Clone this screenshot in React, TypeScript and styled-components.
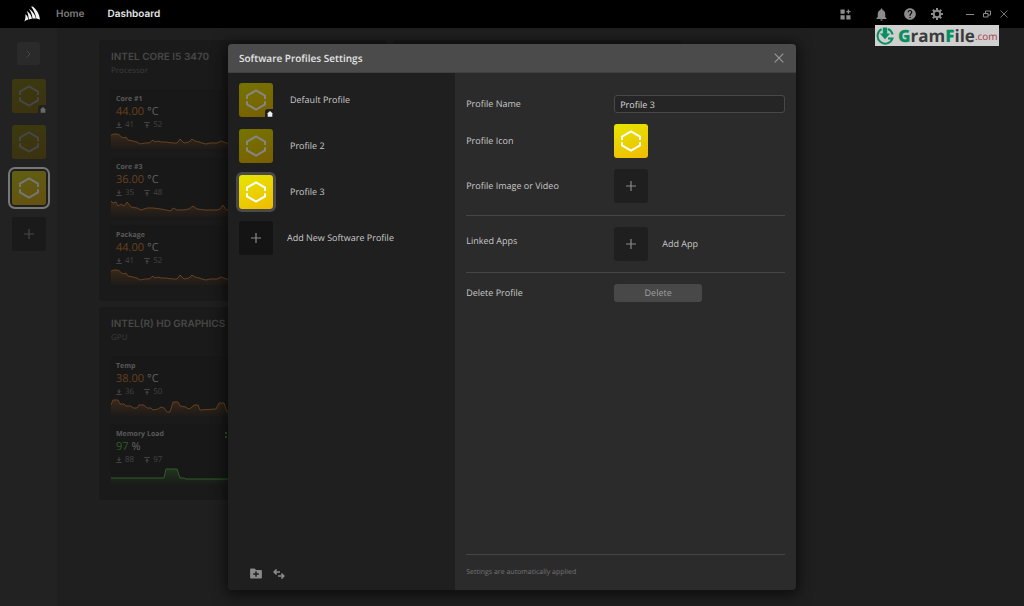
import React from "react";
import styled, { createGlobalStyle, css } from "styled-components";
import { MdHelp, MdNotifications } from "react-icons/md";

const Global = createGlobalStyle`
  *, *::before, *::after { box-sizing: border-box; }
  html, body, #root { height: 100%; }
  body {
    margin: 0;
    background: #1f1f1f;
    color: #c8c8c8;
    font: 9px/12px "Open Sans", "Noto Sans", sans-serif;
    text-rendering: geometricPrecision;
    overflow: hidden;
  }
  button, input { font: inherit; color: inherit; text-rendering: inherit; }
  button { border: 0; padding: 0; background: none; cursor: pointer; }
  h1, h2, h3, p, ul { margin: 0; padding: 0; }
  ul { list-style: none; }
  svg { display: block; flex: none; }
`;

const Page = styled.div`
  min-height: 100%;
  display: flex;
  flex-direction: column;
  position: relative;
`;

const TopBar = styled.header`
  height: 28px;
  flex: none;
  display: flex;
  align-items: center;
  padding: 0 16px 0 24px;
  background: #000;
`;

const Nav = styled.nav`
  display: flex;
  gap: 23px;
  margin-left: 16px;
  flex: 1;
`;

const NavLink = styled.a<{ $active?: boolean }>`
  font: 600 10px/14px Inter, "Open Sans", sans-serif;
  color: ${(p) => (p.$active ? "#e6e6e6" : "#7c7c7c")};
  text-decoration: none;
`;

const BarTools = styled.div<{ $gap: number; $before?: number }>`
  display: flex;
  align-items: center;
  gap: ${(p) => p.$gap}px;
  margin-left: ${(p) => p.$before ?? 0}px;
  color: #8c8c8c;
`;

const IconButton = styled.button`
  display: grid;
  place-items: center;
`;

const Body = styled.div`
  flex: 1;
  display: flex;
`;

const Side = styled.aside`
  width: 57px;
  flex: none;
  display: flex;
  flex-direction: column;
  align-items: center;
  gap: 12px;
  padding-top: 14px;
  background: #222;
`;

const Expand = styled.button`
  width: 23px;
  height: 23px;
  display: grid;
  place-items: center;
  border-radius: 3px;
  background: #2a2a2a;
  color: #484848;
  margin-bottom: 2px;
`;

const tileColors = {
  bright: css`background: linear-gradient(160deg, #e6e600, #efbc00); color: #fff;`,
  muted: css`background: linear-gradient(160deg, #757400, #785f00); color: #858585;`,
  dim: css`background: linear-gradient(160deg, #3b3a10, #3c3110); color: #464646;`,
  dimActive: css`background: linear-gradient(160deg, #605f12, #645010); color: #767676;`,
  plain: css`background: #141414; color: #8a8a8a;`,
  plainSoft: css`background: #1f1f1f; color: #8a8a8a;`,
  plainDim: css`background: #1a1a1a; color: #484848;`,
};

const Tile = styled.button<{ $kind: keyof typeof tileColors; $ring?: "line" | "solid" }>`
  position: relative;
  width: 34px;
  height: 34px;
  flex: none;
  display: grid;
  place-items: center;
  border-radius: 3px;
  ${(p) => tileColors[p.$kind]}
  ${(p) => p.$ring === "line" && css`box-shadow: 0 0 0 2px #1f1f1f, 0 0 0 4px #777;`}
  ${(p) => p.$ring === "solid" && css`box-shadow: 0 0 0 3px #4a4a4a;`}
`;

const HomeBadge = styled.span<{ $dim?: boolean }>`
  position: absolute;
  right: -1px;
  bottom: -1px;
  padding: 2px 1px 1px 2px;
  border-radius: 3px 0 0 0;
  background: ${(p) => (p.$dim ? "#222" : "#1f1f1f")};
  color: ${(p) => (p.$dim ? "#6a6a6a" : "#f0f0f0")};
`;

const Board = styled.main`
  flex: 1;
  display: grid;
  grid-template-columns: repeat(2, 288px);
  gap: 6px;
  align-content: start;
  padding: 12px 0 0 42px;
  overflow: hidden;
`;

const Card = styled.section`
  padding: 10px 12px 14px;
  border-radius: 4px;
  background: #1a1a1a;
`;

const CardTitle = styled.h2`
  font: 600 10px/14px Inter, "Open Sans", sans-serif;
  color: #484848;
`;

const CardSub = styled.p`
  font-size: 8px;
  line-height: 14px;
  margin-bottom: 11px;
  color: #3c3c3c;
`;

const Sensors = styled.div`
  display: grid;
  gap: 6px;
`;

const Sensor = styled.article`
  width: 130px;
  padding-top: 5px;
  border-radius: 3px;
  background: #181818;
  overflow: hidden;
`;

const SensorHead = styled.div`
  display: flex;
  justify-content: space-between;
  align-items: center;
  padding: 0 11px 0 5px;
`;

const SensorName = styled.h3`
  font-size: 7px;
  line-height: 12px;
  font-weight: 700;
  color: #5a5a5a;
`;

const Reading = styled.p<{ $color: string }>`
  padding-left: 5px;
  font-size: 11px;
  line-height: 12px;
  color: #636363;
  b { font-weight: 400; color: ${(p) => p.$color}; }
`;

const Range = styled.p`
  display: flex;
  align-items: center;
  gap: 3px;
  padding-left: 5px;
  font-size: 8px;
  line-height: 13px;
  color: #444;
  span { margin-right: 7px; }
`;

const Watermark = styled.div`
  position: absolute;
  top: 25px;
  right: 25px;
  width: 124px;
  height: 21px;
  display: flex;
  align-items: center;
  padding: 0 1px;
  background: #d0d0d0;
  z-index: 3;
  white-space: nowrap;
  font: 700 17px/20px "Open Sans", sans-serif;
  color: #3c3c3c;
  svg { margin-right: 4px; }
  b { color: #0a8f62; }
  small { font: 400 10px/20px "Open Sans", sans-serif; color: #a83a48; }
`;

const Overlay = styled.div`
  position: absolute;
  inset: 28px 0 0;
  display: flex;
  justify-content: center;
  padding: 16px;
`;

const Dialog = styled.div`
  width: 100%;
  max-width: 568px;
  display: flex;
  flex-direction: column;
  border-radius: 4px;
  overflow: hidden;
  box-shadow: 0 2px 14px 3px rgba(0, 0, 0, 0.6);
  background: #2b2b2b;
`;

const DialogHead = styled.div`
  height: 29px;
  flex: none;
  display: flex;
  align-items: center;
  justify-content: space-between;
  padding: 0 12px 0 11px;
  background: #4b4b4b;
  border-bottom: 1px solid #404040;
  color: #989898;
`;

const DialogTitle = styled.h1`
  font-size: 10px;
  line-height: 14px;
  font-weight: 600;
  color: #e4e4e4;
`;

const DialogBody = styled.div`
  flex: 1;
  display: flex;
`;

const ProfilePane = styled.div`
  width: 40%;
  display: flex;
  flex-direction: column;
  justify-content: space-between;
  padding: 10px 11px 11px;
  background: #1f1f1f;
`;

const ProfileList = styled.ul`
  display: grid;
  gap: 12px;
`;

const ProfileRow = styled.li<{ $gap?: number }>`
  display: flex;
  align-items: center;
  gap: ${(p) => p.$gap ?? 17}px;
`;

const PaneTools = styled.div`
  display: flex;
  align-items: center;
  gap: 11px;
  padding-left: 11px;
  color: #8a8a8a;
`;

const SettingsPane = styled.form`
  flex: 1;
  display: flex;
  flex-direction: column;
  padding: 22px 11px 11px;
`;

const Fields = styled.div`
  display: grid;
  gap: 11px;
  padding-bottom: 12px;
`;

const Field = styled.div`
  display: flex;
  align-items: center;
`;

const FieldName = styled.label<{ $top?: boolean }>`
  width: 148px;
  flex: none;
  ${(p) => p.$top && css`align-self: flex-start; padding-top: 8px;`}
`;

const TextBox = styled.input`
  flex: 1;
  min-width: 0;
  height: 18px;
  padding: 0 5px;
  border: 1px solid #484848;
  border-radius: 3px;
  background: #252525;
  color: #d8d8d8;
`;

const Group = styled.div`
  border-top: 1px solid #454545;
  padding: 11px 0;
`;

const DeleteButton = styled.button`
  width: 88px;
  height: 18px;
  border-radius: 3px;
  background: #484848;
  color: #a0a0a0;
`;

const AppHint = styled.span`
  margin-left: 14px;
`;

const Note = styled.p`
  margin-top: auto;
  padding-top: 12px;
  border-top: 1px solid #454545;
  font-size: 7px;
  color: #747474;
`;

const Hex = () => (
  <svg width="22" height="24" viewBox="0 0 22 24" fill="none" stroke="currentColor" strokeWidth="2">
    <path d="M2 11V7.600L11 2.500l9 5.100V11M2 13.300v3.100l9 5.100 9-5.100v-3.100" />
  </svg>
);

const Plus = () => (
  <svg width="10" height="10" viewBox="0 0 10 10" stroke="currentColor" strokeWidth="1.2">
    <path d="M5 0v10M0 5h10" />
  </svg>
);

const House = () => (
  <svg width="6" height="6" viewBox="0 0 7 7" fill="currentColor">
    <path d="M3.500 0L7 3.300H6.200V6.800H.8V3.300H0z" />
  </svg>
);

const Down = () => (
  <svg width="6" height="6" viewBox="0 0 6 6" stroke="currentColor" fill="currentColor" strokeWidth="1">
    <path d="M3 0v3M.2 5.500h5.600" /><path d="M1 2.200h4L3 4.400z" strokeWidth="0" />
  </svg>
);

const Up = () => (
  <svg width="6" height="6" viewBox="0 0 6 6" stroke="currentColor" fill="currentColor" strokeWidth="1">
    <path d="M3 6V3M.2.5h5.600" /><path d="M1 3.800h4L3 1.600z" strokeWidth="0" />
  </svg>
);

const Sails = () => (
  <svg width="16" height="16" viewBox="0 0 16 16" fill="#f2f2f2">
    <path d="M.3 15.600C1.500 13 1.700 10.600 1.300 8.200c1.900 1.300 2.800 3.100 2.900 5.400-1.400.5-2.700 1.100-3.900 2z" />
    <path d="M4.700 13.400C4.600 10.300 4 7.400 2.600 4.800c3 2 4.900 4.800 5.400 7.900-1.200.1-2.200.3-3.300.7z" />
    <path d="M8.500 12.600C8.200 8.700 6.900 5.500 4.900 2.700c3.900 2.500 6.300 6 7 9.800-1.200-.1-2.200-.1-3.400.1z" />
    <path d="M12.300 12.500C11.500 8.100 9.800 4 7 .5l1.400.3.200-.6C12.700 3.600 15.400 7.900 16 13.500c-1.200-.5-2.400-.8-3.700-1z" />
  </svg>
);

const Gear = () => (
  <svg width="12" height="12" viewBox="0 0 12 12" fill="none" stroke="currentColor">
    <circle cx="6" cy="6" r="3.300" strokeWidth="2" />
    <path d="M6 0v2.500M6 9.500V12M0 6h2.500M9.500 6H12M1.800 1.800l1.700 1.700M8.500 8.500l1.700 1.700M10.200 1.800L8.500 3.500M3.500 8.500l-1.700 1.700" strokeWidth="2" />
  </svg>
);

const ORANGE = "#67401f";
const GREEN = "#2d5f27";

const heat = "0,4 3,3 7,3 12,7 15,6 17,9 22,10 26,11 29,13 34,12 38,12 42,9 44,11 47,10 50,11 54,11 62,12 66,12 69,8 73,12 78,11 81,8 84,10 88,11 91,12 95,13 99,12 106,12 110,10 115,12 130,12";
const series: Record<string, string> = {
  heat,
  core3: "0,2 2,4 5,3 7,7 10,5 13,7 16,3 20,8 26,9 30,11 36,9 42,9 50,10 60,12 62,9 66,11 72,11 78,10 82,7 86,10 94,11 100,11 106,11 109,10 112,6 115,11 120,10 130,11",
  temp: "0,7 2,2 7,2 9,6 13,6 15,8 20,8 22,10 26,10 28,7 33,7 36,10 40,10 42,12 47,11 50,9 53,10 56,14 59,14 62,4 67,4 69,8 75,9 77,11 80,10 83,7 87,7 89,12 105,11 108,5 113,5 116,14 121,14 130,14",
  load: "0,12 53,12 55,3 66,3 69,12 73,12 75,13 130,13",
};

const Chart = ({ kind, color }: { kind: string; color: string }) => (
  <svg width="130" height="20" viewBox="0 0 130 20" fill="none">
    <defs>
      <linearGradient id={"fade-" + kind} x1="0" y1="0" x2="0" y2="1">
        <stop offset="0" stopColor={color} stopOpacity=".4" />
        <stop offset="1" stopColor={color} stopOpacity="0.02" />
      </linearGradient>
    </defs>
    <polygon points={`${series[kind]} 130,20 0,20`} fill={`url(#fade-${kind})`} />
    <polyline points={series[kind]} stroke={color} strokeWidth="1" />
  </svg>
);

type SensorData = { name: string; value: string; unit: string; lo: number; hi: number; chart: string; green?: boolean };

const SensorTile = ({ s }: { s: SensorData }) => {
  const color = s.green ? GREEN : ORANGE;
  return (
    <Sensor>
      <SensorHead>
        <SensorName>{s.name}</SensorName>
        {s.green && (
          <svg width="5" height="6" viewBox="0 0 5 6" fill={GREEN}><path d="M0 0h2v2H0zM0 4h2v2H0zM3 0h2v6H3z" /></svg>
        )}
      </SensorHead>
      <Reading $color={color}><b>{s.value}</b> {s.unit}</Reading>
      <Range><Down /><span>{s.lo}</span><Up /><span>{s.hi}</span></Range>
      <Chart kind={s.chart} color={color} />
    </Sensor>
  );
};

const cpu: SensorData[] = [
  { name: "Core #1", value: "44.00", unit: "°C", lo: 41, hi: 52, chart: "heat" },
  { name: "Core #3", value: "36.00", unit: "°C", lo: 35, hi: 48, chart: "core3" },
  { name: "Package", value: "44.00", unit: "°C", lo: 41, hi: 52, chart: "heat" },
];
const gpu: SensorData[] = [
  { name: "Temp", value: "38.00", unit: "°C", lo: 36, hi: 50, chart: "temp" },
  { name: "Memory Load", value: "97", unit: "%", lo: 88, hi: 97, chart: "load", green: true },
];

const SensorCard = ({ title, sub, items }: { title: string; sub: string; items: SensorData[] }) => (
  <Card>
    <CardTitle>{title}</CardTitle>
    <CardSub>{sub}</CardSub>
    <Sensors>{items.map((s) => <SensorTile key={s.name} s={s} />)}</Sensors>
  </Card>
);

export default function App() {
  return (
    <Page>
      <Global />
      <TopBar>
        <Sails />
        <Nav>
          <NavLink href="#home">Home</NavLink>
          <NavLink href="#dashboard" $active>Dashboard</NavLink>
        </Nav>
        <BarTools $gap={16}>
          <IconButton aria-label="Add widget">
            <svg width="11" height="11" viewBox="0 0 11 11" fill="currentColor">
              <path d="M.5.5h4.200v4.200H.5zM.5 6.300h4.200v4.200H.5zM6.300 6.300h4.200v4.200H6.300zM7.700.5h1.400v1.400h1.400v1.400H9.100v1.400H7.700V3.300H6.300V1.900h1.400z" />
            </svg>
          </IconButton>
        </BarTools>
        <BarTools $gap={14} $before={23}>
          <IconButton aria-label="Notifications"><MdNotifications size={15} /></IconButton>
          <IconButton aria-label="Help"><MdHelp size={14} /></IconButton>
          <IconButton aria-label="Settings"><Gear /></IconButton>
        </BarTools>
        <BarTools $gap={9} $before={23}>
          <IconButton aria-label="Minimize">
            <svg width="8" height="8" viewBox="0 0 8 8" stroke="currentColor"><path d="M0 4.500h8" /></svg>
          </IconButton>
          <IconButton aria-label="Restore">
            <svg width="8" height="8" viewBox="0 0 8 8" fill="none" stroke="currentColor">
              <path d="M.5 3.500h4.500v3.500H.5zM2.500 3.500v-2.500h5v4H5" />
            </svg>
          </IconButton>
          <IconButton aria-label="Close window">
            <svg width="8" height="8" viewBox="0 0 8 8" stroke="currentColor" strokeWidth=".8"><path d="M.5.5l7 7M7.500.5l-7 7" /></svg>
          </IconButton>
        </BarTools>
      </TopBar>
      <Body>
        <Side>
          <Expand aria-label="Expand">
            <svg width="5" height="8" viewBox="0 0 5 8" fill="none" stroke="currentColor"><path d="M.7.7L4 4 .7 7.300" /></svg>
          </Expand>
          <Tile $kind="dim" aria-label="Default Profile"><Hex /><HomeBadge $dim><House /></HomeBadge></Tile>
          <Tile $kind="dim" aria-label="Profile 2"><Hex /></Tile>
          <Tile $kind="dimActive" $ring="line" aria-label="Profile 3"><Hex /></Tile>
          <Tile $kind="plainDim" aria-label="Add profile"><Plus /></Tile>
        </Side>
        <Board>
          <SensorCard title="INTEL CORE I5 3470" sub="Processor" items={cpu} />
          <Card />
          <SensorCard title="INTEL(R) HD GRAPHICS" sub="GPU" items={gpu} />
        </Board>
      </Body>
      <Overlay>
        <Dialog role="dialog" aria-labelledby="dialog-title">
          <DialogHead>
            <DialogTitle id="dialog-title">Software Profiles Settings</DialogTitle>
            <IconButton aria-label="Close">
              <svg width="10" height="10" viewBox="0 0 10 10" stroke="currentColor" strokeWidth="1.2"><path d="M.7.7l8.600 8.600M9.300.7L.7 9.300" /></svg>
            </IconButton>
          </DialogHead>
          <DialogBody>
            <ProfilePane>
              <ProfileList>
                <ProfileRow>
                  <Tile $kind="muted" aria-label="Default Profile"><Hex /><HomeBadge><House /></HomeBadge></Tile>
                  Default Profile
                </ProfileRow>
                <ProfileRow><Tile $kind="muted" aria-label="Profile 2"><Hex /></Tile>Profile 2</ProfileRow>
                <ProfileRow><Tile $kind="bright" $ring="solid" aria-label="Profile 3"><Hex /></Tile>Profile 3</ProfileRow>
                <ProfileRow $gap={14}><Tile $kind="plain" aria-label="Add New Software Profile"><Plus /></Tile>Add New Software Profile</ProfileRow>
              </ProfileList>
              <PaneTools>
                <IconButton aria-label="Add folder">
                  <svg width="12" height="11" viewBox="0 0 12 11">
                    <path fill="currentColor" d="M1 .5h3.600L6 1.900h5a.9.9 0 0 1 .9.900v6.800a.9.900 0 0 1-.9.900H1a.9.900 0 0 1-.9-.9V1.400A.9.900 0 0 1 1 .5z" />
                    <path stroke="#1f1f1f" strokeWidth="1.400" d="M6 3.200v5.600M3.200 6h5.600" />
                  </svg>
                </IconButton>
                <IconButton aria-label="Import or export">
                  <svg width="12" height="10" viewBox="0 0 12 10" fill="none" stroke="currentColor" strokeWidth="1.500">
                    <path d="M3.600.4L1.100 2.900l2.500 2.500M1.100 2.900H7M8.400 4.600l2.500 2.500-2.500 2.500M10.900 7.100H5" />
                  </svg>
                </IconButton>
              </PaneTools>
            </ProfilePane>
            <SettingsPane>
              <Fields>
                <Field><FieldName htmlFor="pname">Profile Name</FieldName><TextBox id="pname" defaultValue="Profile 3" /></Field>
                <Field><FieldName htmlFor="picon">Profile Icon</FieldName><Tile id="picon" type="button" $kind="bright"><Hex /></Tile></Field>
                <Field><FieldName htmlFor="pimage">Profile Image or Video</FieldName><Tile id="pimage" type="button" $kind="plainSoft"><Plus /></Tile></Field>
              </Fields>
              <Group>
                <Field>
                  <FieldName htmlFor="papps" $top>Linked Apps</FieldName>
                  <Tile id="papps" type="button" $kind="plainSoft"><Plus /></Tile>
                  <AppHint>Add App</AppHint>
                </Field>
              </Group>
              <Group>
                <Field><FieldName htmlFor="pdelete">Delete Profile</FieldName><DeleteButton id="pdelete" type="button">Delete</DeleteButton></Field>
              </Group>
              <Note>Settings are automatically applied</Note>
            </SettingsPane>
          </DialogBody>
        </Dialog>
      </Overlay>
      <Watermark>
        <svg width="18" height="18" viewBox="0 0 18 18" fill="none" stroke="#0a8f62">
          <path d="M5.500 2.200A7.700 7.700 0 1 0 16.500 11.500H12M12 2A7.700 7.700 0 0 1 16.600 7.500" strokeWidth="2" />
          <path d="M6.800 0.500h4.400v6h3L9 12.200 3.800 6.500h3z" fill="#0a8f62" stroke="none" />
        </svg>
        <b>G</b>ram<b>F</b>ile<small>.com</small>
      </Watermark>
    </Page>
  );
}
